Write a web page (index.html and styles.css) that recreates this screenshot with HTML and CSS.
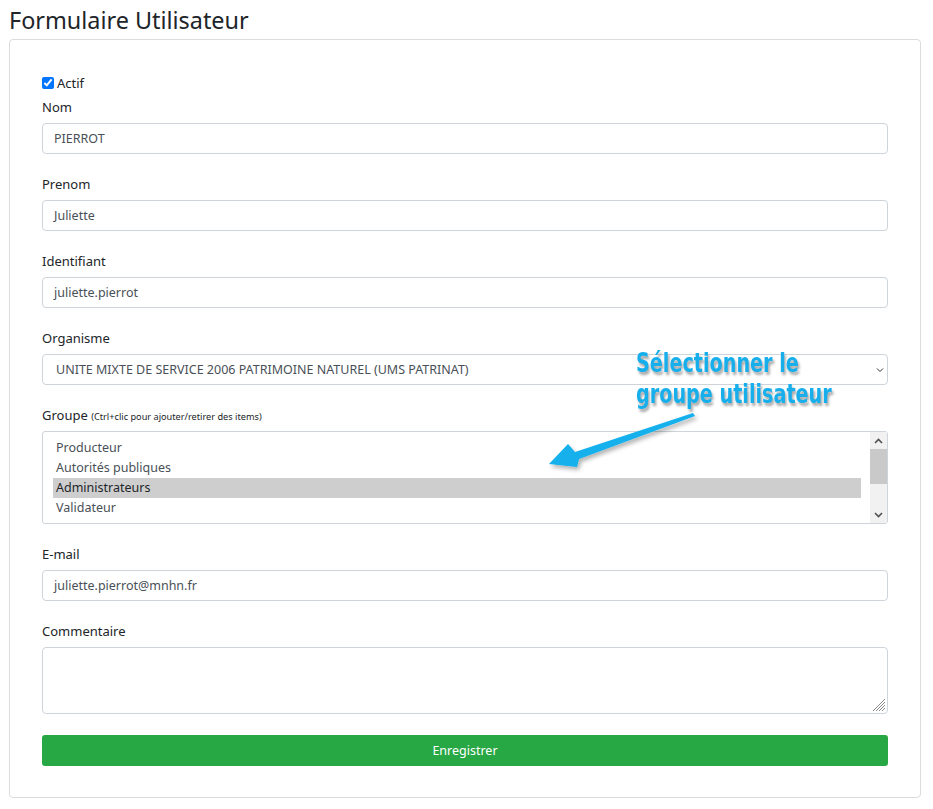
FILE: index.html
```html
<!DOCTYPE html>
<html lang="fr">
<head>
<meta charset="utf-8">
<title>Formulaire Utilisateur</title>
<link rel="stylesheet" href="styles.css">
</head>
<body>
<div class="page">
  <h1 class="title">Formulaire Utilisateur</h1>
  <div class="card">
    <div class="card-body">
      <label class="check"><input type="checkbox" checked> Actif</label>

      <div class="group first">
        <label class="lbl">Nom</label>
        <div class="input">PIERROT</div>
      </div>
      <div class="group">
        <label class="lbl">Prenom</label>
        <div class="input">Juliette</div>
      </div>
      <div class="group">
        <label class="lbl">Identifiant</label>
        <div class="input">juliette.pierrot</div>
      </div>
      <div class="group">
        <label class="lbl">Organisme</label>
        <div class="input select">
          <span>UNITE MIXTE DE SERVICE 2006 PATRIMOINE NATUREL (UMS PATRINAT)</span>
          <svg class="chev" width="8" height="6" viewBox="0 0 8 6"><path d="M1 1.5 L4 4.5 L7 1.5" fill="none" stroke="#333" stroke-width="1"/></svg>
        </div>
      </div>
      <div class="group">
        <label class="lbl">Groupe <small>(Ctrl+clic pour ajouter/retirer des items)</small></label>
        <div class="multi">
          <div class="opts">
            <div class="opt">Producteur</div>
            <div class="opt">Autorités publiques</div>
            <div class="opt sel">Administrateurs</div>
            <div class="opt">Validateur</div>
          </div>
          <div class="sb">
            <div class="sb-btn"><svg width="9" height="6" viewBox="0 0 9 6"><path d="M1 5 L4.5 1.5 L8 5" fill="none" stroke="#505050" stroke-width="1.6"/></svg></div>
            <div class="sb-track"><div class="sb-thumb"></div></div>
            <div class="sb-btn"><svg width="9" height="6" viewBox="0 0 9 6"><path d="M1 1 L4.5 4.5 L8 1" fill="none" stroke="#505050" stroke-width="1.6"/></svg></div>
          </div>
        </div>
      </div>
      <div class="group">
        <label class="lbl">E-mail</label>
        <div class="input">juliette.pierrot@mnhn.fr</div>
      </div>
      <div class="group">
        <label class="lbl">Commentaire</label>
        <div class="textarea">
          <svg class="grip" width="14" height="14" viewBox="0 0 14 14"><path d="M13 1 L1 13 M13 4 L4 13 M13 7 L7 13 M13 10 L10 13" stroke="#888" stroke-width="1"/></svg>
        </div>
      </div>
      <button class="btn">Enregistrer</button>
    </div>

    <div class="note">Sélectionner le<br>groupe utilisateur</div>
    <svg class="arrow" width="160" height="64" viewBox="0 0 160 64">
      <defs>
        <filter id="sh" x="-20%" y="-40%" width="150%" height="190%">
          <feDropShadow dx="2" dy="3" stdDeviation="2" flood-color="#000" flood-opacity="0.3"/>
        </filter>
      </defs>
      <polygon filter="url(#sh)" fill="#12b0ec" points="145,1 147,4 31,47 29,55 1,52 20,32 27,40"/>
    </svg>
  </div>
</div>
</body>
</html>
```

FILE: styles.css
```css
* { box-sizing: border-box; }
html, body { margin: 0; padding: 0; background: #fff; }
body {
  font-family: "Noto Sans", "Open Sans", sans-serif;
  color: #212529;
  font-size: 13px;
}
.page { padding: 0 12px 0 9px; }
.title {
  font-weight: 400;
  font-size: 23.4px;
  line-height: 26px;
  margin: 0;
  padding: 7px 0 6px 0;
}
.card {
  position: relative;
  border: 1px solid #dcdcdc;
  border-radius: 4px;
  height: 759px;
}
.card-body { padding: 33px 32px 31px 32px; }
.check {
  display: flex;
  align-items: center;
  height: 20px;
  font-size: 13px;
}
.check input { margin: 0 3px 0 0; width: 12px; height: 12px; accent-color: #0075ff; }
.group { margin-top: 20px; }
.group.first { margin-top: 4px; }
.lbl {
  display: block;
  height: 20px;
  line-height: 20px;
  margin-bottom: 6px;
  font-size: 13px;
}
.lbl small { font-size: 9.2px; }
.input {
  height: 31px;
  border: 1px solid #ced4da;
  border-radius: 4px;
  padding: 0 11px;
  display: flex;
  align-items: center;
  color: #495057;
  font-size: 12.5px;
}
.select { justify-content: space-between; padding-left: 13px; padding-right: 3px; }
.chev { flex: none; }
.multi {
  height: 93px;
  border: 1px solid #ced4da;
  border-radius: 3px;
  display: flex;
  color: #495057;
  font-size: 12.5px;
}
.opts { flex: 1; padding: 6px 9px 0 10px; }
.opt { height: 20px; line-height: 20px; padding-left: 3px; }
.opt.sel { background: #cecece; color: #212529; }
.sb { width: 17px; display: flex; flex-direction: column; background: #f1f1f1; }
.sb-btn { height: 17px; display: flex; align-items: center; justify-content: center; }
.sb-track { flex: 1; }
.sb-thumb { height: 35px; background: #c9c9c9; }
.textarea {
  position: relative;
  height: 67px;
  border: 1px solid #ced4da;
  border-radius: 4px;
}
.grip { position: absolute; right: 1px; bottom: 1px; }
.btn {
  display: block;
  width: 100%;
  height: 31px;
  margin-top: 21px;
  border: 0;
  border-radius: 3px;
  background: #28a745;
  color: #fff;
  font-family: inherit;
  font-size: 12.5px;
}
.note {
  position: absolute;
  left: 626px;
  top: 307px;
  font-family: "DejaVu Sans Condensed", "DejaVu Sans", sans-serif;
  font-weight: 700;
  font-size: 27px;
  line-height: 31px;
  color: #16afec;
  text-shadow: 2px 3px 3px rgba(0,0,0,0.35);
  transform: scaleX(0.79);
  transform-origin: 0 0;
  white-space: nowrap;
}
.arrow {
  position: absolute;
  left: 538px;
  top: 372px;
}
```
